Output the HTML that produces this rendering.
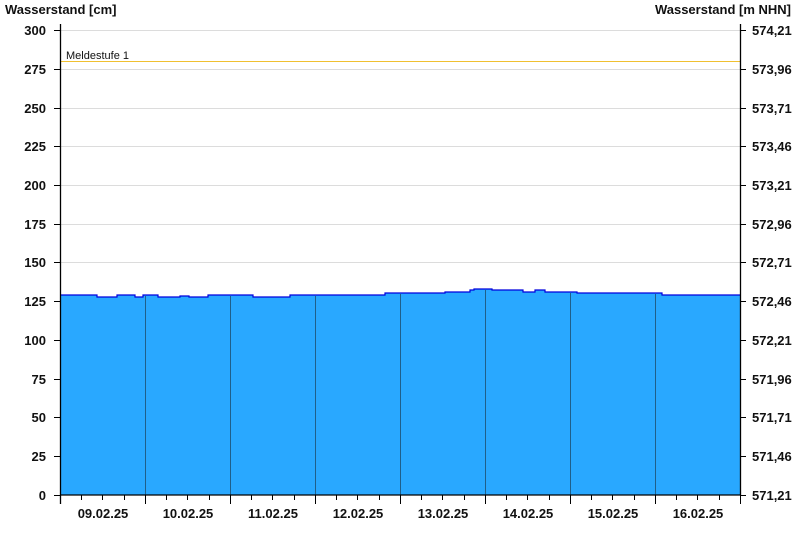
<!DOCTYPE html>
<html><head><meta charset="utf-8"><style>
html,body{margin:0;padding:0;background:#fff;width:800px;height:550px;overflow:hidden}
svg text{font-family:"Liberation Sans",Arial,sans-serif;font-weight:bold;font-size:13px;fill:#111}
</style></head><body>
<svg width="800" height="550" xmlns="http://www.w3.org/2000/svg">
<g stroke="#dcdcdc" stroke-width="1">
<line x1="60" x2="740" y1="30.5" y2="30.5"/>
<line x1="60" x2="740" y1="69.5" y2="69.5"/>
<line x1="60" x2="740" y1="108.5" y2="108.5"/>
<line x1="60" x2="740" y1="146.5" y2="146.5"/>
<line x1="60" x2="740" y1="185.5" y2="185.5"/>
<line x1="60" x2="740" y1="224.5" y2="224.5"/>
<line x1="60" x2="740" y1="262.5" y2="262.5"/>
</g>
<rect x="60" y="61" width="680" height="1" fill="#f0c030"/>
<text x="66" y="59" style="font-weight:normal;font-size:11px">Meldestufe 1</text>
<path fill="#29a8ff" stroke="none" d="M60 295 H97 V297 H117 V295 H135 V297 H143 V295 H158 V297 H180 V296 H189 V297 H208 V295 H253 V297 H290 V295 H385 V293 H445 V292 H470 V290 H474 V289 H492 V290 H523 V292 H535 V290 H545 V292 H577 V293 H662 V295 H740 V495 H60 Z"/>
<path fill="none" stroke="#0000dd" stroke-width="1.2" d="M60 295 H97 V297 H117 V295 H135 V297 H143 V295 H158 V297 H180 V296 H189 V297 H208 V295 H253 V297 H290 V295 H385 V293 H445 V292 H470 V290 H474 V289 H492 V290 H523 V292 H535 V290 H545 V292 H577 V293 H662 V295 H740"/>
<g stroke="#1f5f8a" stroke-width="1">
<line x1="145.5" x2="145.5" y1="296" y2="495"/><line x1="230.5" x2="230.5" y1="296" y2="495"/>
<line x1="315.5" x2="315.5" y1="296" y2="495"/><line x1="400.5" x2="400.5" y1="294" y2="495"/>
<line x1="485.5" x2="485.5" y1="290" y2="495"/><line x1="570.5" x2="570.5" y1="293" y2="495"/>
<line x1="655.5" x2="655.5" y1="294" y2="495"/>
</g>
<g stroke="#000" stroke-width="1.3">
<line x1="60.5" x2="60.5" y1="24" y2="504"/>
<line x1="740.5" x2="740.5" y1="24" y2="495"/>
<line x1="60" x2="741" y1="495" y2="495"/>
</g>
<g stroke="#000" stroke-width="1">
<path d="M54 30.5H60M54 69.5H60M54 108.5H60M54 146.5H60M54 185.5H60M54 224.5H60M54 262.5H60M54 301.5H60M54 340.5H60M54 379.5H60M54 417.5H60M54 456.5H60M54 495.5H60"/>
<path d="M740 30.5H746M740 69.5H746M740 108.5H746M740 146.5H746M740 185.5H746M740 224.5H746M740 262.5H746M740 301.5H746M740 340.5H746M740 379.5H746M740 417.5H746M740 456.5H746M740 495.5H746"/>
<path d="M145.5 495V504M230.5 495V504M315.5 495V504M400.5 495V504M485.5 495V504M570.5 495V504M655.5 495V504M740.5 495V504"/>
<path d="M81.5 495V500M102.5 495V500M124.5 495V500M166.5 495V500M187.5 495V500M209.5 495V500M251.5 495V500M272.5 495V500M294.5 495V500M336.5 495V500M357.5 495V500M379.5 495V500M421.5 495V500M442.5 495V500M464.5 495V500M506.5 495V500M527.5 495V500M549.5 495V500M591.5 495V500M612.5 495V500M634.5 495V500M676.5 495V500M697.5 495V500M719.5 495V500"/>
</g>
<text x="5" y="14">Wasserstand [cm]</text>
<text x="791" y="14" text-anchor="end">Wasserstand [m NHN]</text>
<g text-anchor="end">
<text x="46" y="35">300</text><text x="46" y="74">275</text><text x="46" y="113">250</text>
<text x="46" y="151">225</text><text x="46" y="190">200</text><text x="46" y="229">175</text>
<text x="46" y="267">150</text><text x="46" y="306">125</text><text x="46" y="345">100</text>
<text x="46" y="384">75</text><text x="46" y="422">50</text><text x="46" y="461">25</text><text x="46" y="500">0</text>
</g>
<g>
<text x="752" y="35">574,21</text><text x="752" y="74">573,96</text><text x="752" y="113">573,71</text>
<text x="752" y="151">573,46</text><text x="752" y="190">573,21</text><text x="752" y="229">572,96</text>
<text x="752" y="267">572,71</text><text x="752" y="306">572,46</text><text x="752" y="345">572,21</text>
<text x="752" y="384">571,96</text><text x="752" y="422">571,71</text><text x="752" y="461">571,46</text><text x="752" y="500">571,21</text>
</g>
<g text-anchor="middle">
<text x="103" y="518">09.02.25</text><text x="188" y="518">10.02.25</text><text x="273" y="518">11.02.25</text>
<text x="358" y="518">12.02.25</text><text x="443" y="518">13.02.25</text><text x="528" y="518">14.02.25</text>
<text x="613" y="518">15.02.25</text><text x="698" y="518">16.02.25</text>
</g>
</svg>
</body></html>
